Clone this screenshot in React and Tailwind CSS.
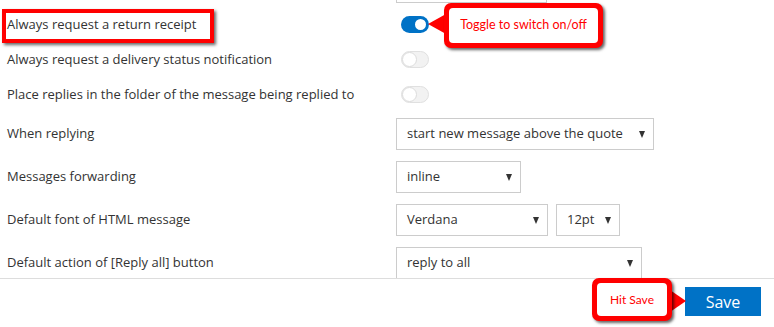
import React from "react";

function Toggle({ on }) {
  if (on) {
    return (
      <div className="w-[28px] h-[17px] rounded-full bg-[#0072c6] flex items-center justify-end pr-[1px]">
        <div className="w-[15px] h-[15px] rounded-full bg-white border-2 border-[#0072c6]" />
      </div>
    );
  }
  return (
    <div className="w-[28px] h-[17px] rounded-full bg-[#f2f2f2] border border-[#e0e0e0] flex items-center justify-start">
      <div className="w-[15px] h-[15px] rounded-full bg-white border border-[#dcdcdc]" />
    </div>
  );
}

function Select({ value, width }) {
  return (
    <div
      className={`${width} h-[32px] border border-[#cccccc] bg-white flex items-center justify-between pl-[10px] pr-[8px] text-[13px] text-[#333]`}
    >
      <span>{value}</span>
      <span className="w-0 h-0 border-x-[3.5px] border-x-transparent border-t-[7px] border-t-[#333]" />
    </div>
  );
}

const toggles = [
  { label: "Always request a return receipt", on: true },
  { label: "Always request a delivery status notification", on: false },
  { label: "Place replies in the folder of the message being replied to", on: false },
];

export default function App() {
  return (
    <div
      className="relative w-[774px] h-[327px] bg-white overflow-hidden text-[#333]"
      style={{ fontFamily: '"Open Sans", sans-serif' }}
    >
      <div className="h-[278px] overflow-hidden">
        <div className="ml-[396px] w-[151px] h-[3px] border-x border-b border-[#cccccc]" />
        <div className="pt-[4px]">
          {toggles.map((t) => (
            <div key={t.label} className="h-[35px] flex items-center">
              <div className="w-[401px] pl-[7px] text-[13px]">{t.label}</div>
              <Toggle on={t.on} />
            </div>
          ))}
        </div>
        <div className="pt-[6px] flex flex-col gap-[11px]">
          <div className="flex items-center">
            <div className="w-[396px] pl-[7px] text-[13px]">When replying</div>
            <Select value="start new message above the quote" width="w-[258px]" />
          </div>
          <div className="flex items-center">
            <div className="w-[396px] pl-[7px] text-[13px]">Messages forwarding</div>
            <Select value="inline" width="w-[125px]" />
          </div>
          <div className="flex items-center">
            <div className="w-[396px] pl-[7px] text-[13px]">Default font of HTML message</div>
            <Select value="Verdana" width="w-[152px]" />
            <div className="ml-[8px]">
              <Select value="12pt" width="w-[64px]" />
            </div>
          </div>
          <div className="flex items-center">
            <div className="w-[396px] pl-[7px] text-[13px]">Default action of [Reply all] button</div>
            <Select value="reply to all" width="w-[246px]" />
          </div>
        </div>
      </div>

      <div className="border-t border-[#dddddd] flex justify-end pr-[13px] pt-[8px]">
        <button className="w-[76px] h-[29px] bg-[#0072c6] text-white text-[16px] flex items-center justify-center">
          Save
        </button>
      </div>

      {/* highlight around first label */}
      <div className="absolute left-[2px] top-[9px] w-[212px] h-[34px] border-4 border-[#ff0000] shadow-[2px_2px_3px_rgba(0,0,0,0.6)]" />

      {/* toggle callout */}
      <div className="absolute left-[428px] top-[14px] w-0 h-0 border-y-[10px] border-y-transparent border-r-[18px] border-r-[#ff0000]" />
      <div className="absolute left-[444px] top-[3px] w-[159px] h-[45px] rounded-[7px] bg-[#ff0000] p-[5px] shadow-[2px_2px_3px_rgba(0,0,0,0.6)]">
        <div
          className="w-full h-full rounded-[4px] bg-white flex items-center justify-center text-[#ff0000] text-[12.5px]"
          style={{ fontFamily: "Lato, sans-serif" }}
        >
          Toggle to switch on/off
        </div>
      </div>

      {/* save callout */}
      <div className="absolute left-[670px] top-[290px] w-0 h-0 border-y-[11px] border-y-transparent border-l-[16px] border-l-[#ff0000]" />
      <div className="absolute left-[592px] top-[278px] w-[80px] h-[43px] rounded-[7px] bg-[#ff0000] p-[5px] shadow-[2px_2px_3px_rgba(0,0,0,0.6)]">
        <div
          className="w-full h-full rounded-[4px] bg-white flex items-center justify-center text-[#ff0000] text-[12px]"
          style={{ fontFamily: "Lato, sans-serif" }}
        >
          Hit Save
        </div>
      </div>
    </div>
  );
}
